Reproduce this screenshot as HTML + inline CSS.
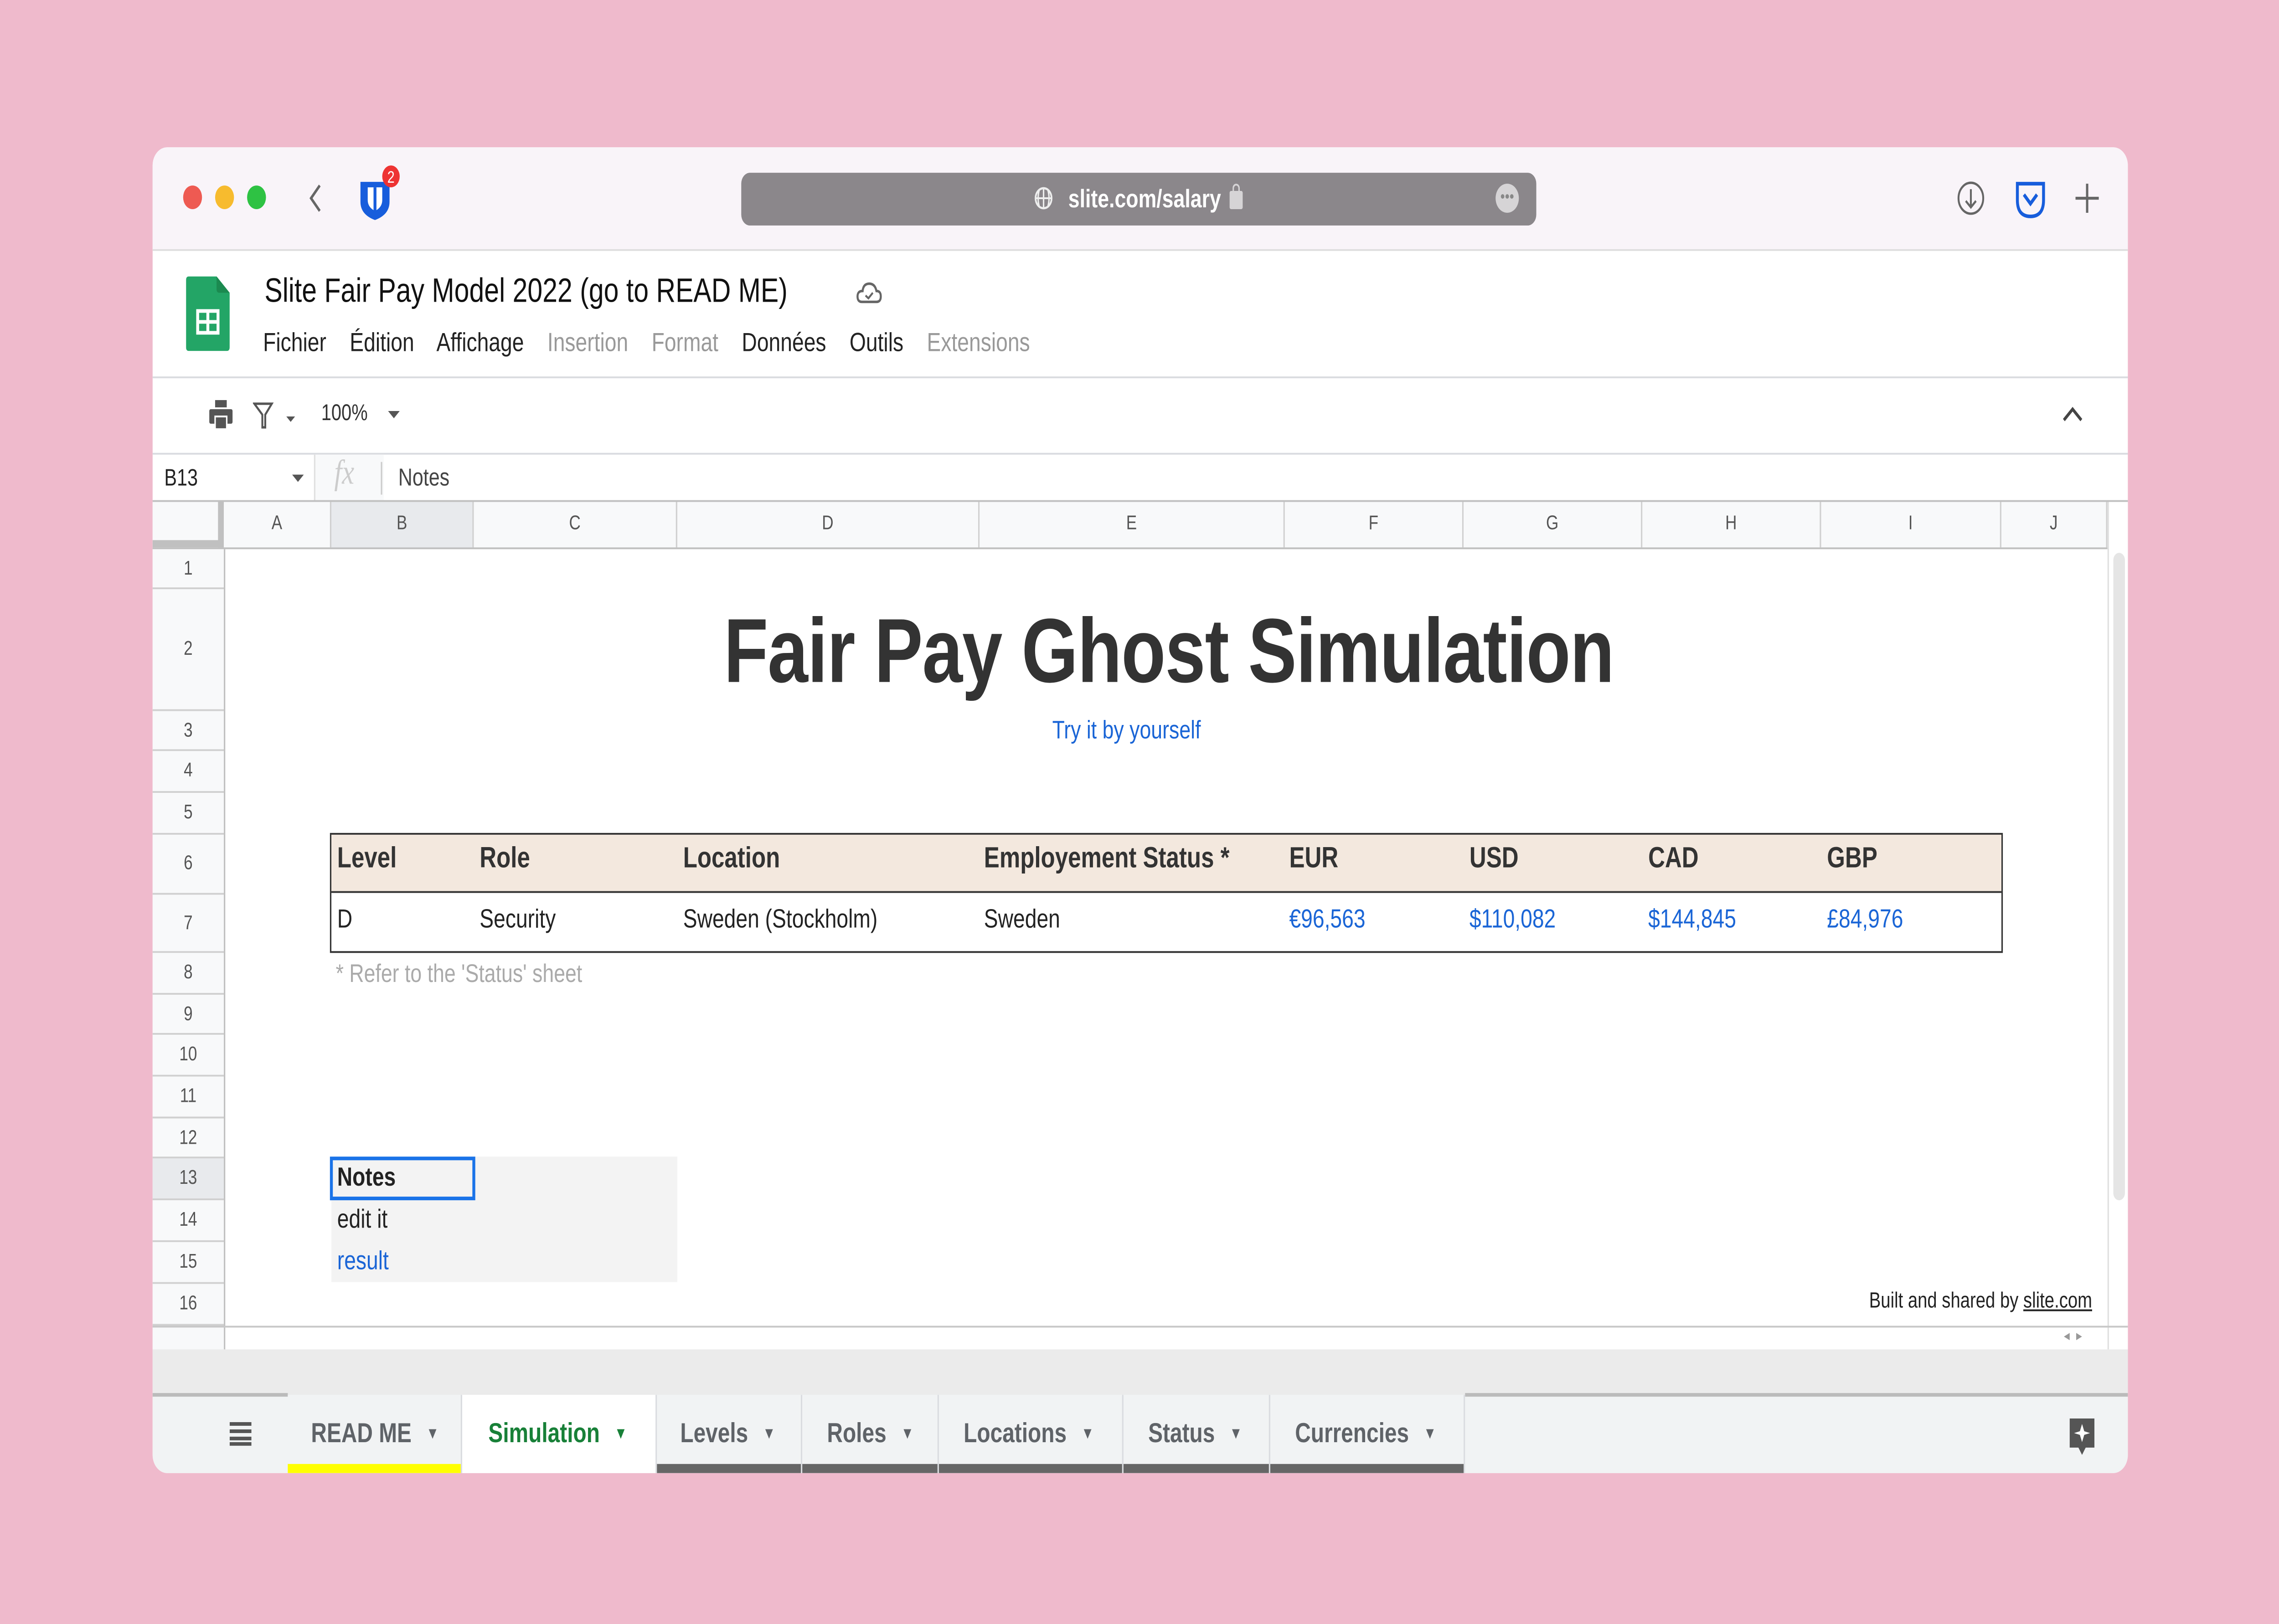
<!DOCTYPE html>
<html><head><meta charset="utf-8"><style>
*{margin:0;padding:0;box-sizing:border-box}
html,body{width:100%;height:100%;overflow:hidden;background:#efbacc}
#wrap{position:fixed;left:0;top:0;width:100vw;height:100vh;display:block}
#s{position:relative;width:1568px;height:893px;font-family:"Liberation Sans",sans-serif;background:#efbacc}
.a{position:absolute}
.win{left:105px;top:81px;width:1359px;height:729px;background:#fff;border-radius:10px;overflow:hidden}
.t{white-space:nowrap}
.ch{position:absolute;top:276px;height:25px;border-right:1px solid #d0d0d0;font-size:11px;color:#555;text-align:center;line-height:25px;background:#f8f9fa}
.rh{position:absolute;left:105px;width:49px;border-bottom:1px solid #d0d0d0;font-size:11px;color:#555;text-align:center;background:#f8f9fa}
.cell{position:absolute;font-size:14.5px;color:#222;white-space:nowrap}
.blue{color:#1a65d6}
.tab{position:absolute;top:767px;height:43px;font-size:15px;font-weight:bold;color:#5f6368;line-height:43px;background:#f1f3f4;border-right:1px solid #dadce0;white-space:nowrap}
.tab i{font-style:normal;font-size:9px;margin-left:10px;vertical-align:2px}
.tab b{position:absolute;left:0;right:0;bottom:0;height:5px;background:#666}
</style></head><body>
<svg id="wrap" viewBox="0 0 1568 893" preserveAspectRatio="none" xmlns="http://www.w3.org/2000/svg"><foreignObject x="0" y="0" width="1568" height="893"><div xmlns="http://www.w3.org/1999/xhtml" id="s">
<div class="a win"></div>
<div class="a" style="left:105px;top:81px;width:1359px;height:57px;background:#f9f4f9;border-radius:10px 10px 0 0;border-bottom:1px solid #ddd"></div>
<div class="a" style="left:126px;top:102px;width:13px;height:13px;border-radius:50%;background:#ee5a52"></div>
<div class="a" style="left:148px;top:102px;width:13px;height:13px;border-radius:50%;background:#f7bb2e"></div>
<div class="a" style="left:170px;top:102px;width:13px;height:13px;border-radius:50%;background:#2ec243"></div>
<svg class="a" style="left:210px;top:100px" width="14" height="18"><path d="M10 2 L4 9 L10 16" stroke="#666" stroke-width="1.6" fill="none"/></svg>
<svg class="a" style="left:246px;top:90px" width="30" height="32"><path d="M2 10H22V21Q22 28 12 31Q2 28 2 21Z" fill="#175ddc"/><path d="M7 13H17V20Q17 24 12 26Q7 24 7 20Z" fill="#fff"/><path d="M12 13V26" stroke="#175ddc" stroke-width="2"/><circle cx="23" cy="7" r="6" fill="#e33"/><text x="23" y="10.5" font-size="9" fill="#fff" text-anchor="middle" font-family="Liberation Sans">2</text></svg>
<div class="a" style="left:510px;top:95px;width:547px;height:29px;background:#8b878b;border-radius:6px"></div>
<svg class="a" style="left:711px;top:102px" width="14" height="14"><circle cx="7" cy="7" r="5.5" stroke="#eee" fill="none" stroke-width="1.2"/><path d="M1.5 7H12.5M7 1.5V12.5M4 2.5Q2.5 7 4 11.5M10 2.5Q11.5 7 10 11.5" stroke="#eee" fill="none" stroke-width="1"/></svg>
<div class="a t" style="left:735px;top:101px;font-size:14px;color:#fff;font-weight:bold">slite.com/salary</div>
<div class="a" style="left:846px;top:105px;width:9px;height:10px;background:#d6d4d6;border-radius:1px"></div>
<div class="a" style="left:848px;top:101px;width:5px;height:6px;border:1.5px solid #d6d4d6;border-bottom:none;border-radius:3px 3px 0 0"></div>
<div class="a" style="left:1029px;top:101px;width:16px;height:16px;border-radius:50%;background:#d6d4d6;color:#888;font-size:9px;text-align:center;line-height:14px">•••</div>
<svg class="a" style="left:1346px;top:99px" width="20" height="20"><circle cx="10" cy="10" r="8.5" stroke="#666" fill="none" stroke-width="1.3"/><path d="M10 5V15M6.5 11.5L10 15L13.5 11.5" stroke="#666" fill="none" stroke-width="1.3"/></svg>
<svg class="a" style="left:1386px;top:99px" width="22" height="22"><path d="M2 2H20V11Q20 20 11 20Q2 20 2 11Z" stroke="#175ddc" fill="none" stroke-width="2"/><path d="M6.5 8L11 13L15.5 8" stroke="#175ddc" fill="none" stroke-width="2"/></svg>
<svg class="a" style="left:1427px;top:100px" width="18" height="18"><path d="M9 1V17M1 9H17" stroke="#666" stroke-width="1.6"/></svg>
<svg class="a" style="left:128px;top:152px" width="32" height="41"><path d="M2 0H21L30 9V39Q30 41 28 41H2Q0 41 0 39V2Q0 0 2 0Z" fill="#23a566"/><path d="M21 0L30 9H23Q21 9 21 7Z" fill="#1b8a50"/><rect x="7" y="18" width="16" height="14" fill="#fff"/><rect x="9" y="20" width="5" height="4" fill="#23a566"/><rect x="16" y="20" width="5" height="4" fill="#23a566"/><rect x="9" y="26" width="5" height="4" fill="#23a566"/><rect x="16" y="26" width="5" height="4" fill="#23a566"/></svg>
<div class="a t" style="left:182px;top:149px;font-size:18.5px;color:#111">Slite Fair Pay Model 2022 (go to READ ME)</div>
<svg class="a" style="left:588px;top:153px" width="20" height="16"><path d="M5 13H15Q18 13 18 10Q18 7 15 7Q14 3 10 3Q6 3 5.5 7Q2 7 2 10Q2 13 5 13Z" stroke="#666" fill="none" stroke-width="1.4"/><path d="M7.5 9.5L9.5 11L12.5 8" stroke="#666" fill="none" stroke-width="1.2"/></svg>
<div class="a t" style="left:181px;top:181px;font-size:14.5px;color:#222">Fichier&#160;&#160;&#160; Édition&#160;&#160;&#160; Affichage&#160;&#160;&#160; <span style="color:#999">Insertion&#160;&#160;&#160; Format</span>&#160;&#160;&#160; Données&#160;&#160;&#160; Outils&#160;&#160;&#160; <span style="color:#999">Extensions</span></div>
<div class="a" style="left:105px;top:207px;width:1359px;height:1px;background:#dadce0"></div>
<svg class="a" style="left:143px;top:219px" width="18" height="18"><rect x="5" y="1" width="8" height="4" fill="#555"/><rect x="1" y="6" width="16" height="8" rx="1" fill="#555"/><rect x="5" y="10" width="8" height="7" fill="#555" stroke="#fff" stroke-width="1"/></svg>
<svg class="a" style="left:174px;top:220px" width="32" height="18"><path d="M1 2H13L8.5 8V15H6.5V8Z" stroke="#555" fill="none" stroke-width="1.3"/><path d="M23 9H29L26 12Z" fill="#555"/></svg>
<div class="a t" style="left:221px;top:220px;font-size:12.5px;color:#333">100%</div>
<svg class="a" style="left:266px;top:224px" width="10" height="8"><path d="M1 2H9L5 6Z" fill="#555"/></svg>
<svg class="a" style="left:1418px;top:221px" width="16" height="12"><path d="M2 10L8 4L14 10" stroke="#444" fill="none" stroke-width="1.8"/></svg>
<div class="a" style="left:105px;top:249px;width:1359px;height:1px;background:#dadce0"></div>
<div class="a t" style="left:113px;top:255px;font-size:13px;color:#222">B13</div>
<svg class="a" style="left:200px;top:259px" width="10" height="8"><path d="M1 2H9L5 6Z" fill="#555"/></svg>
<div class="a" style="left:216px;top:250px;width:48px;height:26px;background:#f8f9fa;border-left:1px solid #e0e0e0"></div>
<div class="a t" style="left:230px;top:250px;font-size:19px;color:#ccc;font-style:italic;font-family:'Liberation Serif',serif">fx</div>
<div class="a" style="left:262px;top:254px;width:1px;height:18px;background:#ccc"></div>
<div class="a t" style="left:274px;top:255px;font-size:13.5px;color:#444">Notes</div>
<div class="a" style="left:105px;top:275px;width:1359px;height:1px;background:#c0c0c0"></div>
<div class="a" style="left:105px;top:276px;width:49px;height:25px;background:#f8f9fa;border-right:4px solid #c0c0c0;border-bottom:4px solid #c0c0c0"></div>
<div class="ch" style="left:154px;width:74px">A</div>
<div class="ch" style="left:228px;width:98px;background:#e8eaed">B</div>
<div class="ch" style="left:326px;width:140px">C</div>
<div class="ch" style="left:466px;width:208px">D</div>
<div class="ch" style="left:674px;width:210px">E</div>
<div class="ch" style="left:884px;width:123px">F</div>
<div class="ch" style="left:1007px;width:123px">G</div>
<div class="ch" style="left:1130px;width:123px">H</div>
<div class="ch" style="left:1253px;width:124px">I</div>
<div class="ch" style="left:1377px;width:73px">J</div>
<div class="a" style="left:105px;top:301px;width:1345px;height:1px;background:#c0c0c0"></div>
<div class="rh" style="top:302px;height:22px;line-height:22px">1</div>
<div class="rh" style="top:324px;height:67px;line-height:67px">2</div>
<div class="rh" style="top:391px;height:22px;line-height:22px">3</div>
<div class="rh" style="top:413px;height:23px;line-height:23px">4</div>
<div class="rh" style="top:436px;height:23px;line-height:23px">5</div>
<div class="rh" style="top:459px;height:33px;line-height:33px">6</div>
<div class="rh" style="top:492px;height:32px;line-height:32px">7</div>
<div class="rh" style="top:524px;height:23px;line-height:23px">8</div>
<div class="rh" style="top:547px;height:22px;line-height:22px">9</div>
<div class="rh" style="top:569px;height:23px;line-height:23px">10</div>
<div class="rh" style="top:592px;height:23px;line-height:23px">11</div>
<div class="rh" style="top:615px;height:22px;line-height:22px">12</div>
<div class="rh" style="top:637px;height:23px;line-height:23px;background:#e8eaed">13</div>
<div class="rh" style="top:660px;height:23px;line-height:23px">14</div>
<div class="rh" style="top:683px;height:23px;line-height:23px">15</div>
<div class="rh" style="top:706px;height:23px;line-height:23px">16</div>
<div class="a" style="left:154px;top:302px;width:1px;height:440px;background:#c0c0c0"></div>
<div class="a t" style="left:498px;top:329px;font-size:50px;font-weight:bold;color:#333;letter-spacing:-0.4px">Fair Pay Ghost Simulation</div>
<div class="a t blue" style="left:724px;top:393px;font-size:14px">Try it by yourself</div>
<div class="a" style="left:227px;top:458px;width:1151px;height:66px;border:1.5px solid #333"></div>
<div class="a" style="left:228px;top:459px;width:1149px;height:32px;background:#f3e8de;border-bottom:1.5px solid #333"></div>
<div class="cell" style="left:232px;top:464px;font-weight:bold;font-size:16px;color:#333">Level</div>
<div class="cell" style="left:330px;top:464px;font-weight:bold;font-size:16px;color:#333">Role</div>
<div class="cell" style="left:470px;top:464px;font-weight:bold;font-size:16px;color:#333">Location</div>
<div class="cell" style="left:677px;top:464px;font-weight:bold;font-size:16px;color:#333">Employement Status *</div>
<div class="cell" style="left:887px;top:464px;font-weight:bold;font-size:16px;color:#333">EUR</div>
<div class="cell" style="left:1011px;top:464px;font-weight:bold;font-size:16px;color:#333">USD</div>
<div class="cell" style="left:1134px;top:464px;font-weight:bold;font-size:16px;color:#333">CAD</div>
<div class="cell" style="left:1257px;top:464px;font-weight:bold;font-size:16px;color:#333">GBP</div>
<div class="cell" style="left:232px;top:498px">D</div>
<div class="cell" style="left:330px;top:498px">Security</div>
<div class="cell" style="left:470px;top:498px">Sweden (Stockholm)</div>
<div class="cell" style="left:677px;top:498px">Sweden</div>
<div class="cell blue" style="left:887px;top:498px">€96,563</div>
<div class="cell blue" style="left:1011px;top:498px">$110,082</div>
<div class="cell blue" style="left:1134px;top:498px">$144,845</div>
<div class="cell blue" style="left:1257px;top:498px">£84,976</div>
<div class="cell" style="left:231px;top:527px;color:#aaa;font-size:14px">* Refer to the 'Status' sheet</div>
<div class="a" style="left:228px;top:636px;width:238px;height:69px;background:#f3f3f3"></div>
<div class="a" style="left:227px;top:636px;width:100px;height:24px;border:2px solid #1a73e8;background:#f3f3f3"></div>
<div class="cell" style="left:232px;top:640px;font-weight:bold">Notes</div>
<div class="cell" style="left:232px;top:663px">edit it</div>
<div class="cell blue" style="left:232px;top:686px">result</div>
<div class="cell" style="left:1286px;top:708px;font-size:12px">Built and shared by <u>slite.com</u></div>
<div class="a" style="left:1450px;top:276px;width:14px;height:466px;background:#fff;border-left:1px solid #e0e0e0"></div>
<div class="a" style="left:1454px;top:304px;width:8px;height:356px;background:#e5e5e5;border-radius:4px"></div>
<div class="a" style="left:105px;top:729px;width:1359px;height:1px;background:#c8c8c8"></div>
<div class="a" style="left:105px;top:730px;width:49px;height:12px;background:#f8f9fa"></div>
<div class="a t" style="left:1420px;top:730px;font-size:8px;color:#999">◂ &#160;▸</div>
<div class="a" style="left:105px;top:742px;width:1359px;height:25px;background:#ebebeb"></div>
<div class="a" style="left:105px;top:767px;width:1359px;height:43px;background:#f1f3f4;border-radius:0 0 10px 10px"></div>
<div class="a" style="left:105px;top:766px;width:93px;height:2px;background:#bbb"></div>
<div class="a" style="left:1008px;top:766px;width:456px;height:2px;background:#bbb"></div>
<svg class="a" style="left:158px;top:781px" width="15" height="14"><rect x="0" y="1" width="15" height="2" fill="#555"/><rect x="0" y="5" width="15" height="2" fill="#555"/><rect x="0" y="9" width="15" height="2" fill="#555"/><rect x="0" y="12" width="15" height="2" fill="#555"/></svg>
<div class="tab" style="left:198px;width:120px;padding-left:16px">READ ME<i>▼</i><b style="background:#ffff00"></b></div>
<div class="tab" style="left:318px;width:134px;padding-left:18px;background:#fff;color:#188038">Simulation<i>▼</i></div>
<div class="tab" style="left:452px;width:100px;padding-left:16px">Levels<i>▼</i><b></b></div>
<div class="tab" style="left:552px;width:94px;padding-left:17px">Roles<i>▼</i><b></b></div>
<div class="tab" style="left:646px;width:127px;padding-left:17px">Locations<i>▼</i><b></b></div>
<div class="tab" style="left:773px;width:101px;padding-left:17px">Status<i>▼</i><b></b></div>
<div class="tab" style="left:874px;width:134px;padding-left:17px">Currencies<i>▼</i><b></b></div>
<svg class="a" style="left:1422px;top:779px" width="21" height="23"><path d="M2 1H19V17H13L10.5 21L8 17H2Z" fill="#555"/><path d="M10.5 4L12 8L16 9L12 10L10.5 14L9 10L5 9L9 8Z" fill="#fff"/></svg>
</div></foreignObject></svg>
</body></html>
